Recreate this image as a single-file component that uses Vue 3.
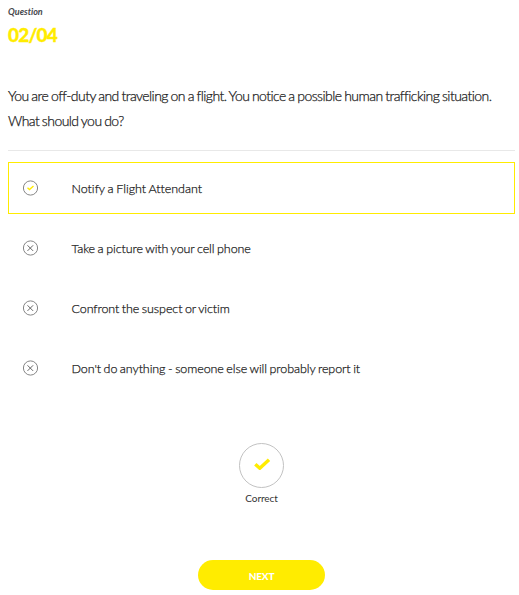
<script setup>
const answers = [
  { text: 'Notify a Flight Attendant', correct: true },
  { text: 'Take a picture with your cell phone', correct: false },
  { text: 'Confront the suspect or victim', correct: false },
  { text: "Don't do anything - someone else will probably report it", correct: false },
]
</script>

<template>
  <main class="quiz">
    <div class="label">Question</div>
    <div class="count">02/04</div>
    <p class="question">You are off-duty and traveling on a flight. You notice a possible human trafficking situation. What should you do?</p>
    <ul class="answers">
      <li v-for="a in answers" :key="a.text" class="answer" :class="{ selected: a.correct }">
        <svg class="mark" viewBox="0 0 16 16" width="16" height="16" fill="none">
          <circle cx="7.5" cy="8" r="7.1" stroke="#868686" stroke-width="1" />
          <path v-if="a.correct" d="M4.5 7.8l2 1.8 4-3.6" stroke="#ffec00" stroke-width="1.4" />
          <path v-else d="M4.5 5.3l5.6 5.6M10.1 5.3l-5.6 5.6" stroke="#666" stroke-width="1" />
        </svg>
        <span>{{ a.text }}</span>
      </li>
    </ul>
    <div class="result">
      <div class="badge">
        <svg class="check" viewBox="0 0 18 14" width="18" height="14"><path d="M2.3 7.2l4.5 4.1L16 2.8" fill="none" stroke="#ffec00" stroke-width="3.4" stroke-linejoin="round" /></svg>
      </div>
      <div class="verdict">Correct</div>
    </div>
    <button class="next">NEXT</button>
  </main>
</template>

<style>
body { background: #fff; }
</style>
<style scoped>
.quiz { box-sizing: border-box; height: 595px; padding: 5px 4px 0 8px; font-family: Lato, sans-serif; color: #333; font-variant-ligatures: none; display: flex; flex-direction: column; overflow: hidden; }
.label { font-size: 9px; line-height: 14px; font-weight: 700; font-style: italic; color: #45474b; }
.count { margin-top: 4px; font-size: 19px; line-height: 24px; font-weight: 900; letter-spacing: -0.8px; color: #ffec00; -webkit-text-stroke: 0.3px #ffec00; }
.question { margin: 36px 0 0; height: 67px; border-bottom: 1px solid #e8e8e8; font-size: 14px; line-height: 25px; font-weight: 300; letter-spacing: -0.55px; word-spacing: -0.6px; color: #222; -webkit-text-stroke: 0.25px #222; }
.answers { list-style: none; margin: 11px 0 0; padding: 0; display: flex; flex-direction: column; gap: 8px; }
.answer { box-sizing: border-box; height: 52px; padding-left: 14px; border: 1px solid transparent; display: flex; align-items: center; gap: 32.5px; font-size: 12.5px; font-weight: 300; letter-spacing: -0.09px; word-spacing: -0.7px; color: #222; -webkit-text-stroke: 0.25px #222; }
.selected { border-color: #ffec00; letter-spacing: -0.01px; }
.result { margin-top: 49px; display: flex; flex-direction: column; align-items: center; }
.badge { box-sizing: border-box; width: 45px; height: 45px; border: 1px solid #c2c2c2; border-radius: 50%; display: flex; align-items: center; justify-content: center; }
.check { margin-bottom: 3px; }
.verdict { margin-top: 3px; font-size: 10px; line-height: 14px; letter-spacing: -0.1px; }
.next { align-self: center; margin-top: 55px; width: 127px; height: 30px; padding: 1px 0 0; border: 0; border-radius: 15px; background: #ffec00; color: #fff; font: 900 10px Lato, sans-serif; letter-spacing: -0.2px; }
</style>
